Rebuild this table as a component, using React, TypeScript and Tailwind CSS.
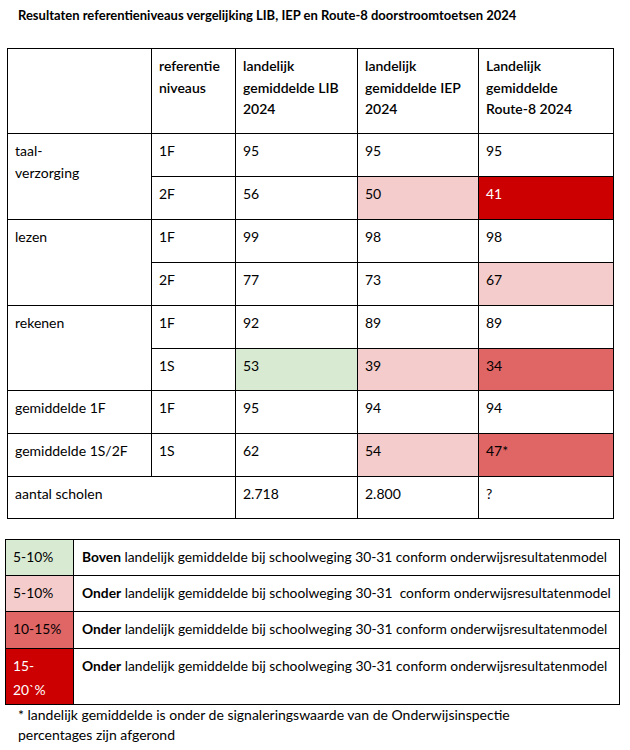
const GREEN = "bg-[#d9ead3]";
const PINK = "bg-[#f4cccc]";
const RED = "bg-[#e06666]";
const DARK = "bg-[#cc0000] text-white";

type Cell = { v: string; c?: string };

const cellCls = "border border-black align-top px-[7px] pt-[6px] leading-[21.5px]";

function Row({ label, span, level, vals, h }: { label?: React.ReactNode; span?: number; level: string; vals: Cell[]; h: string }) {
  return (
    <tr className={h}>
      {label !== undefined && (
        <td rowSpan={span} className={cellCls}>
          {label}
        </td>
      )}
      <td className={cellCls}>{level}</td>
      {vals.map((x, i) => (
        <td key={i} className={`${cellCls} ${x.c ?? ""}`}>
          {x.v}
        </td>
      ))}
    </tr>
  );
}

const legend = [
  { pct: "5-10%", bg: GREEN, word: "Boven", rest: " landelijk gemiddelde bij schoolweging 30-31 conform onderwijsresultatenmodel", h: "h-[36px]" },
  { pct: "5-10%", bg: PINK, word: "Onder", rest: " landelijk gemiddelde bij schoolweging 30-31\u00a0 conform onderwijsresultatenmodel", h: "h-[36px]" },
  { pct: "10-15%", bg: RED, word: "Onder", rest: " landelijk gemiddelde bij schoolweging 30-31 conform onderwijsresultatenmodel", h: "h-[37px]" },
  { pct: "15- 20`%", bg: DARK, word: "Onder", rest: " landelijk gemiddelde bij schoolweging 30-31 conform onderwijsresultatenmodel", h: "h-[56px]" },
];

export default function App() {
  return (
    <div className="w-[630px] h-[750px] bg-white text-black font-['Lato',sans-serif] text-[14px] overflow-hidden">
      <h1 className="pl-[18px] pt-[6px] text-[13px] font-bold leading-[18px]">
        Resultaten referentieniveaus vergelijking LIB, IEP en Route-8 doorstroomtoetsen 2024
      </h1>

      <table className="ml-[7px] mt-[24px] w-[606px] table-fixed border-collapse">
        <colgroup>
          <col className="w-[144px]" />
          <col className="w-[84px]" />
          <col className="w-[122px]" />
          <col className="w-[121px]" />
          <col className="w-[135px]" />
        </colgroup>
        <tbody>
          <tr className="h-[85px]">
            <td className={cellCls}></td>
            <td className={`${cellCls} font-semibold`}>referentie<br />niveaus</td>
            <td className={`${cellCls} font-semibold`}>landelijk<br />gemiddelde LIB<br />2024</td>
            <td className={`${cellCls} font-semibold`}>landelijk<br />gemiddelde IEP<br />2024</td>
            <td className={`${cellCls} font-semibold`}>Landelijk<br />gemiddelde<br />Route-8 2024</td>
          </tr>
          <Row label={<>taal-<br />verzorging</>} span={2} level="1F" h="h-[43px]" vals={[{ v: "95" }, { v: "95" }, { v: "95" }]} />
          <Row level="2F" h="h-[43px]" vals={[{ v: "56" }, { v: "50", c: PINK }, { v: "41", c: DARK }]} />
          <Row label="lezen" span={2} level="1F" h="h-[43px]" vals={[{ v: "99" }, { v: "98" }, { v: "98" }]} />
          <Row level="2F" h="h-[43px]" vals={[{ v: "77" }, { v: "73" }, { v: "67", c: PINK }]} />
          <Row label="rekenen" span={2} level="1F" h="h-[43px]" vals={[{ v: "92" }, { v: "89" }, { v: "89" }]} />
          <Row level="1S" h="h-[42px]" vals={[{ v: "53", c: GREEN }, { v: "39", c: PINK }, { v: "34", c: RED }]} />
          <Row label="gemiddelde 1F" span={1} level="1F" h="h-[43px]" vals={[{ v: "95" }, { v: "94" }, { v: "94" }]} />
          <Row label="gemiddelde 1S/2F" span={1} level="1S" h="h-[43px]" vals={[{ v: "62" }, { v: "54", c: PINK }, { v: "47*", c: RED }]} />
          <tr className="h-[42px]">
            <td colSpan={2} className={cellCls}>aantal scholen</td>
            <td className={cellCls}>2.718</td>
            <td className={cellCls}>2.800</td>
            <td className={cellCls}>?</td>
          </tr>
        </tbody>
      </table>

      <table className="ml-[5px] mt-[20px] w-[615px] table-fixed border-collapse text-[13.8px]">
        <colgroup>
          <col className="w-[68px]" />
          <col />
        </colgroup>
        <tbody>
          {legend.map((l, i) => (
            <tr key={i} className={l.h}>
              <td className={`border border-black align-top px-[7px] pt-[5px] leading-[24px] ${l.bg}`}>
                {l.pct === "15- 20`%" ? <>15-<br />20`%</> : l.pct}
              </td>
              <td className="border border-black align-top pl-[8px] pr-[4px] pt-[5px] leading-[24px] whitespace-nowrap">
                <span className="font-bold">{l.word}</span>
                {l.rest}
              </td>
            </tr>
          ))}
        </tbody>
      </table>

      <div className="pl-[18px] mt-0 leading-[20px]">
        <p>* landelijk gemiddelde is onder de signaleringswaarde van de Onderwijsinspectie</p>
        <p>percentages zijn afgerond</p>
      </div>
    </div>
  );
}
